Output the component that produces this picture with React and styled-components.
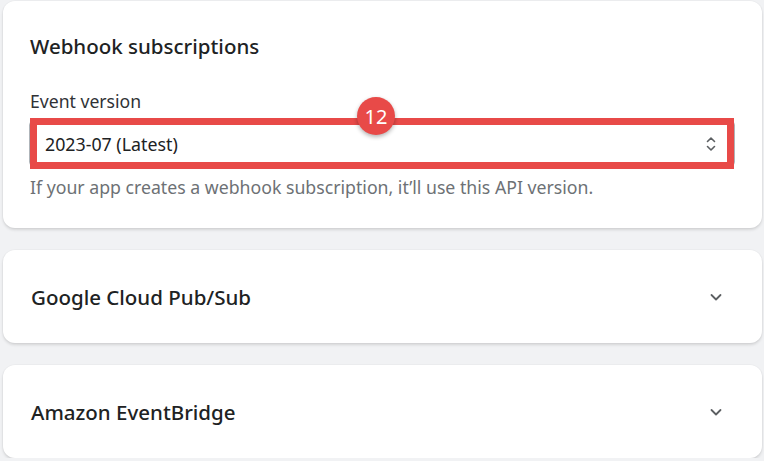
import React from "react"
import styled, { createGlobalStyle } from "styled-components"

const GlobalStyle = createGlobalStyle`
  html, body {
    margin: 0;
    background: #f1f2f4;
    font-family: "Noto Sans", "Open Sans", sans-serif;
    color: #202223;
  }
`

const Page = styled.div`
  display: flex;
  flex-direction: column;
  gap: 22px;
  padding: 1px 2px 0 3px;
`

const Card = styled.section`
  background: #fff;
  border-radius: 12px;
  box-shadow: 0 2px 3px rgba(0, 0, 0, 0.12), 0 0 0 1px rgba(0, 0, 0, 0.02);
  padding: ${({ $compact }) => ($compact ? "0 36px 0 28px" : "31px 27px 29px")};
  height: ${({ $compact }) => ($compact ? "93px" : "auto")};
  box-sizing: border-box;
  display: flex;
  flex-direction: column;
  justify-content: ${({ $compact }) => ($compact ? "center" : "flex-start")};
`

const Heading = styled.h2`
  margin: 0;
  font-size: 20.5px;
  line-height: 28px;
  font-weight: 500;
  color: #202223;
`

const Row = styled.div`
  display: flex;
  align-items: center;
  justify-content: space-between;
`

const Label = styled.label`
  display: block;
  margin-top: 29px;
  font-size: 17.6px;
  line-height: 24px;
  color: #303236;
`

const SelectWrap = styled.div`
  position: relative;
  margin-top: 8px;
  margin-left: -1px;
`

const Select = styled.div`
  height: 45px;
  box-sizing: border-box;
  border: 1px solid #aeb4b9;
  border-radius: 4px;
  background: #fff;
  display: flex;
  align-items: center;
  justify-content: space-between;
  padding: 0 13px 0 15px;
  font-size: 17.8px;
  color: #202223;
`

const Highlight = styled.div`
  position: absolute;
  top: -3px;
  bottom: -3px;
  left: 1px;
  right: 1px;
  border: 7px solid #e84a48;
  pointer-events: none;
`

const Badge = styled.div`
  position: absolute;
  top: -24px;
  left: 328px;
  width: 38px;
  height: 38px;
  border-radius: 50%;
  background: #e84a48;
  color: #fff;
  font-size: 20px;
  display: flex;
  align-items: center;
  justify-content: center;
  box-shadow: 0 2px 4px rgba(0, 0, 0, 0.3);
`

const Help = styled.p`
  margin: 9px 0 0;
  font-size: 17.7px;
  line-height: 24px;
  color: #6d7175;
`

const Icon = styled.svg`
  width: 20px;
  height: 20px;
  color: #5c5f62;
  flex: none;
`

const Chevron = () => (
  <Icon viewBox="0 0 20 20" fill="none" stroke="currentColor" strokeWidth="1.8" strokeLinecap="round" strokeLinejoin="round">
    <path d="M5.5 8l4.5 4.5L14.5 8" />
  </Icon>
)

const SelectArrows = () => (
  <Icon viewBox="0 0 20 20" fill="none" stroke="currentColor" strokeWidth="1.6" strokeLinecap="round" strokeLinejoin="round">
    <path d="M6.5 7.5L10 4l3.5 3.5M6.5 12.5L10 16l3.5-3.5" />
  </Icon>
)

const App = () => (
  <>
    <GlobalStyle />
    <Page>
      <Card>
        <Heading>Webhook subscriptions</Heading>
        <Label>Event version</Label>
        <SelectWrap>
          <Select>
            <span>2023-07 (Latest)</span>
            <SelectArrows />
          </Select>
          <Highlight />
          <Badge>12</Badge>
        </SelectWrap>
        <Help>If your app creates a webhook subscription, it’ll use this API version.</Help>
      </Card>
      <Card $compact>
        <Row>
          <Heading>Google Cloud Pub/Sub</Heading>
          <Chevron />
        </Row>
      </Card>
      <Card $compact>
        <Row>
          <Heading>Amazon EventBridge</Heading>
          <Chevron />
        </Row>
      </Card>
    </Page>
  </>
)

export default App
